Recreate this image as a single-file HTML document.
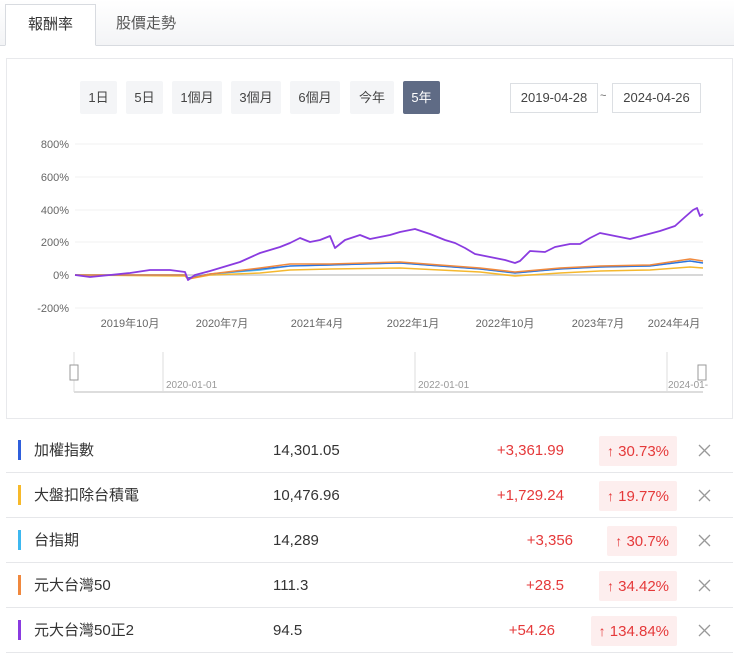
<!DOCTYPE html>
<html><head><meta charset="utf-8"><style>
*{margin:0;padding:0;box-sizing:border-box}
body{width:740px;height:659px;background:#fff;font-family:"Liberation Sans","Noto Sans CJK TC",sans-serif;color:#333;position:relative;overflow:hidden}
.abs{position:absolute}
.tabbar{left:0;top:0;width:734px;height:46px;background:linear-gradient(#fff,#f3f4f6);border-bottom:1px solid #d8dbe0}
.tab{top:4px;height:42px;font-size:15px;line-height:40px;text-align:center}
.btn{top:81px;height:33px;background:#f4f5f7;font-size:13px;line-height:33px;text-align:center;color:#444;border-radius:2px}
.date{top:83px;height:30px;border:1px solid #dcdfe3;font-size:13px;line-height:28px;text-align:center;color:#444}
.row{left:6px;width:727px;height:45px;border-bottom:1px solid #e6e7ea}
.bar{position:absolute;left:12px;top:12px;width:3px;height:20px}
.nm{position:absolute;left:28px;top:1px;line-height:44px;font-size:15px}
.val{position:absolute;left:267px;top:1px;line-height:44px;font-size:15px}
.chg{position:absolute;top:1px;line-height:44px;font-size:15px;color:#e5393a;text-align:right}
.bdg{position:absolute;top:8px;height:30px;background:#fdeeee;color:#e5393a;font-size:15px;line-height:30px;padding:0 8px;border-radius:2px}
.bdg b{font-size:14px}
.x{position:absolute;left:692px;top:16px}
</style></head><body>
<div class="abs tabbar"></div>
<div class="abs tab" style="left:5px;width:91px;background:#fff;border:1px solid #d8dbe0;border-bottom:1px solid #fff">報酬率</div>
<div class="abs tab" style="left:104px;width:84px;color:#555">股價走勢</div>
<div class="abs" style="left:6px;top:58px;width:727px;height:361px;border:1px solid #e8e9ec"></div>
<div class="abs btn" style="left:80px;width:37px">1日</div>
<div class="abs btn" style="left:126px;width:37px">5日</div>
<div class="abs btn" style="left:172px;width:50px">1個月</div>
<div class="abs btn" style="left:231px;width:50px">3個月</div>
<div class="abs btn" style="left:290px;width:50px">6個月</div>
<div class="abs btn" style="left:350px;width:44px">今年</div>
<div class="abs btn" style="left:403px;width:37px;background:#5f6b85;color:#fff">5年</div>
<div class="abs date" style="left:510px;width:88px">2019-04-28</div>
<div class="abs" style="left:600px;top:90px;font-size:11px;color:#666">~</div>
<div class="abs date" style="left:612px;width:89px">2024-04-26</div>
<svg class="abs" style="left:0;top:130px" width="740" height="280" font-family="Liberation Sans,Noto Sans CJK TC,sans-serif" font-size="11" fill="#666">
<g stroke="#f0f0f0"><line x1="75" x2="703" y1="14" y2="14"/><line x1="75" x2="703" y1="47" y2="47"/><line x1="75" x2="703" y1="80" y2="80"/><line x1="75" x2="703" y1="112" y2="112"/><line x1="75" x2="703" y1="178" y2="178"/></g>
<line x1="75" x2="703" y1="145" y2="145" stroke="#ccc" stroke-width="1.5"/>
<g text-anchor="end"><text x="69" y="18">800%</text><text x="69" y="51">600%</text><text x="69" y="84">400%</text><text x="69" y="116">200%</text><text x="69" y="149">0%</text><text x="69" y="182">-200%</text></g>
<g text-anchor="middle"><text x="130" y="197">2019年10月</text><text x="222" y="197">2020年7月</text><text x="317" y="197">2021年4月</text><text x="413" y="197">2022年1月</text><text x="505" y="197">2022年10月</text><text x="598" y="197">2023年7月</text><text x="674" y="197">2024年4月</text></g>
<g fill="none" stroke-linejoin="round">
<polyline stroke="#f5b82e" stroke-width="1.5" points="75,145 185,146 188,149 210,145 260,143 290,140 330,139 400,138 480,142 515,146 560,143 600,141 650,140 690,137 703,138"/>
<polyline stroke="#4db6e8" stroke-width="1.5" points="75,145 185,145 188,148 210,144 260,140 290,136 330,135 400,133 480,139 515,143 560,139 600,137 650,136 690,131 703,133"/>
<polyline stroke="#2f6fde" stroke-width="1.2" points="75,145 185,145 188,148 210,144 260,139 290,136 330,135 400,133 480,139 515,143 560,139 600,137 650,136 690,131 703,133"/>
<polyline stroke="#f08a3e" stroke-width="1.5" points="75,145 185,145 188,149 210,144 260,138 290,134 330,134 400,132 480,138 515,142 560,138 600,136 650,135 690,129 703,131"/>
<polyline stroke="#8a3be0" stroke-width="1.8" points="75,145 90,147 110,145 130,143 150,140 170,140 185,142 188,150 195,145 210,141 230,135 240,132 260,123 280,117 290,113 300,108 310,112 320,110 330,106 335,118 345,110 360,105 370,109 380,107 390,105 400,102 415,99 430,104 445,110 455,113 465,118 475,124 485,126 495,128 505,130 515,133 520,131 530,121 545,122 555,117 570,114 580,114 590,108 600,103 615,106 630,109 645,105 660,101 675,96 685,87 693,80 697,78 700,86 703,84"/>
</g>
<g stroke="#ddd"><line x1="74" x2="74" y1="222" y2="262"/><line x1="163" x2="163" y1="222" y2="262"/><line x1="415" x2="415" y1="222" y2="262"/><line x1="667" x2="667" y1="222" y2="262"/><line x1="74" x2="703" y1="262" y2="262" stroke-width="2"/></g>
<g fill="#999" font-size="10"><text x="166" y="258">2020-01-01</text><text x="418" y="258">2022-01-01</text><text x="668" y="258">2024-01-</text></g>
<rect x="70" y="235" width="8" height="15" fill="#fff" stroke="#999"/><rect x="698" y="235" width="8" height="15" fill="#fff" stroke="#999"/>
</svg>
<div class="abs row" style="top:428px"><div class="bar" style="background:#2f5fdc"></div><div class="nm">加權指數</div><div class="val">14,301.05</div><div class="chg" style="right:169px">+3,361.99</div><div class="bdg" style="right:56px"><b>↑</b> 30.73%</div><svg class="x" width="13" height="13"><path d="M1 1L12 12M12 1L1 12" stroke="#999" stroke-width="1.3"/></svg></div>
<div class="abs row" style="top:473px"><div class="bar" style="background:#f7b92a"></div><div class="nm">大盤扣除台積電</div><div class="val">10,476.96</div><div class="chg" style="right:169px">+1,729.24</div><div class="bdg" style="right:56px"><b>↑</b> 19.77%</div><svg class="x" width="13" height="13"><path d="M1 1L12 12M12 1L1 12" stroke="#999" stroke-width="1.3"/></svg></div>
<div class="abs row" style="top:518px"><div class="bar" style="background:#3db8f0"></div><div class="nm">台指期</div><div class="val">14,289</div><div class="chg" style="right:160px">+3,356</div><div class="bdg" style="right:56px"><b>↑</b> 30.7%</div><svg class="x" width="13" height="13"><path d="M1 1L12 12M12 1L1 12" stroke="#999" stroke-width="1.3"/></svg></div>
<div class="abs row" style="top:563px"><div class="bar" style="background:#f0883e"></div><div class="nm">元大台灣50</div><div class="val">111.3</div><div class="chg" style="right:169px">+28.5</div><div class="bdg" style="right:56px"><b>↑</b> 34.42%</div><svg class="x" width="13" height="13"><path d="M1 1L12 12M12 1L1 12" stroke="#999" stroke-width="1.3"/></svg></div>
<div class="abs row" style="top:608px"><div class="bar" style="background:#8a3be0"></div><div class="nm">元大台灣50正2</div><div class="val">94.5</div><div class="chg" style="right:178px">+54.26</div><div class="bdg" style="right:56px"><b>↑</b> 134.84%</div><svg class="x" width="13" height="13"><path d="M1 1L12 12M12 1L1 12" stroke="#999" stroke-width="1.3"/></svg></div>
</body></html>
